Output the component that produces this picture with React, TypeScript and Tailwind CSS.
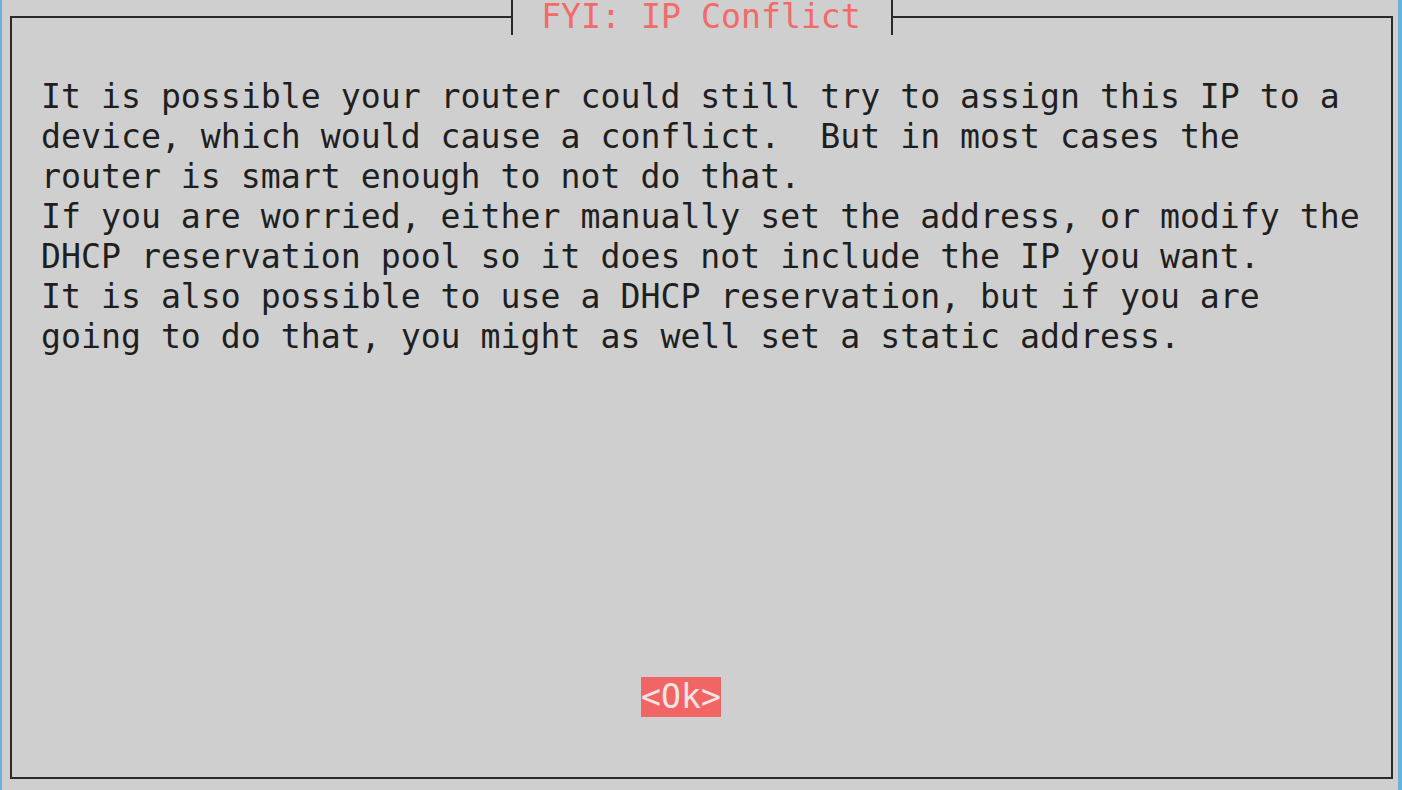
import React from "react";

const lines = [
  "It is possible your router could still try to assign this IP to a",
  "device, which would cause a conflict.  But in most cases the",
  "router is smart enough to not do that.",
  "If you are worried, either manually set the address, or modify the",
  "DHCP reservation pool so it does not include the IP you want.",
  "It is also possible to use a DHCP reservation, but if you are",
  "going to do that, you might as well set a static address.",
];

function Tee({ side }: { side: "left" | "right" }) {
  return (
    <div className="relative w-[20px] h-[40px]">
      <div className="absolute left-[10px] top-0 w-[2px] h-[38px] bg-[#2a2a2a]" />
      {side === "left" ? (
        <div className="absolute left-0 top-[19px] w-[11px] h-[2px] bg-[#2a2a2a]" />
      ) : (
        <div className="absolute left-[11px] top-[19px] w-[9px] h-[2px] bg-[#2a2a2a]" />
      )}
    </div>
  );
}

export default function App() {
  return (
    <div
      className="w-[1402px] h-[790px] bg-[#cfcfcf] flex overflow-hidden"
      style={{ fontFamily: '"DejaVu Sans Mono", "Liberation Mono", monospace' }}
    >
      <div className="w-[2px] h-full bg-[#69b2dc]" />
      <div className="flex-1 relative">
        <div className="absolute left-[8px] top-[16px] w-[1383px] h-[763px] border-2 border-[#2a2a2a] flex flex-col pl-[29px] pt-[59px]">
          <div className="text-[33.2px] leading-[40px] text-[#1f1f1f]">
            {lines.map((l, i) => (
              <div key={i} className="whitespace-pre">
                {l}
              </div>
            ))}
          </div>
          <div className="mt-[320px] ml-[600px] w-[80px] h-[40px] bg-[#f26565] text-[#f3e4e4] text-[33.2px] leading-[40px] whitespace-pre">
            {"<Ok>"}
          </div>
          <div className="absolute left-[489px] top-[-21px] flex items-start bg-[#cfcfcf]">
            <Tee side="left" />
            <div className="w-[360px] mt-[3px] h-[34px] text-center text-[33.2px] leading-[34px] text-[#f26a6a] whitespace-pre">
              FYI: IP Conflict
            </div>
            <Tee side="right" />
          </div>
        </div>
      </div>
      <div className="w-[4px] h-full bg-[#69b2dc]" />
    </div>
  );
}
